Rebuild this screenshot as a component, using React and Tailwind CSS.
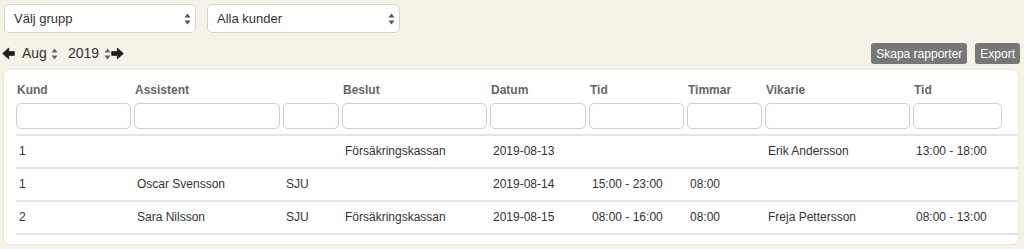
import React from "react";

const Spin = ({ className = "" }) => (
  <svg width="7" height="12" viewBox="0 0 7 12" className={className}>
    <path d="M3.5 0.5 L6.5 4.5 L0.5 4.5 Z" fill="currentColor" />
    <path d="M3.5 11.5 L6.5 7.5 L0.5 7.5 Z" fill="currentColor" />
  </svg>
);

const Arrow = ({ dir }) => (
  <svg width="13" height="13" viewBox="0 0 14 14" style={{ transform: dir === "left" ? "scaleX(-1)" : "none" }}>
    <path d="M0.8 5 H6.8 V1.2 L13.2 7 L6.8 12.8 V9 H0.8 Z" fill="#1e1e1e" stroke="#1e1e1e" strokeWidth="1" strokeLinejoin="round" />
  </svg>
);

const cols = [118, 149, 59, 148, 99, 98, 78, 148, 92];
const headers = ["Kund", "Assistent", "", "Beslut", "Datum", "Tid", "Timmar", "Vikarie", "Tid"];
const rows = [
  ["1", "", "", "Försäkringskassan", "2019-08-13", "", "", "Erik Andersson", "13:00 - 18:00"],
  ["1", "Oscar Svensson", "SJU", "", "2019-08-14", "15:00 - 23:00", "08:00", "", ""],
  ["2", "Sara Nilsson", "SJU", "Försäkringskassan", "2019-08-15", "08:00 - 16:00", "08:00", "Freja Pettersson", "08:00 - 13:00"],
];

const gridCls = "grid grid-cols-[118px_149px_59px_148px_99px_98px_78px_148px_92px]";

export default function App() {
  return (
    <div className="w-[1024px] h-[249px] bg-[#f5f2e7] text-[#333] overflow-hidden" style={{ fontFamily: '"Liberation Sans", Arial, sans-serif' }}>
      <div className="flex gap-[11px] pl-[4px] pt-[4px]">
        <div className="w-[192px] h-[29px] bg-white border border-[#d6d3cb] rounded-[5px] flex items-center justify-between pl-[9px] pr-[4px] text-[13px]">
          <span>Välj grupp</span>
          <Spin className="text-[#555]" />
        </div>
        <div className="w-[193px] h-[29px] bg-white border border-[#d6d3cb] rounded-[5px] flex items-center justify-between pl-[9px] pr-[4px] text-[13px]">
          <span>Alla kunder</span>
          <Spin className="text-[#555]" />
        </div>
      </div>
      <div className="flex items-center justify-between mt-[10px] h-[21px] pr-[4px]">
        <div className="flex items-center pl-[2px] text-[14px]">
          <Arrow dir="left" />
          <span className="ml-[7px]">Aug</span>
          <Spin className="ml-[4px] text-[#666]" />
          <span className="ml-[10px]">2019</span>
          <Spin className="ml-[5px] text-[#666]" />
          <Arrow dir="right" />
        </div>
        <div className="flex gap-[8px]">
          <button className="h-[21px] px-[5px] bg-[#777] text-white text-[12px] rounded-[3px]">Skapa rapporter</button>
          <button className="h-[21px] px-[5px] bg-[#777] text-white text-[12px] rounded-[3px]">Export</button>
        </div>
      </div>
      <div className="mt-[6px] ml-[4px] w-[1014px] h-[174px] bg-white rounded-[6px] shadow-[0_0_2px_1px_rgba(0,0,0,0.06)] pl-[12px] pt-[10px]">
        <div className={gridCls + " h-[20px] items-center text-[12px] font-bold text-[#666]"}>
          {headers.map((h, i) => (
            <div key={i} className="pl-[1px]">{h}</div>
          ))}
        </div>
        <div className={gridCls + " mt-[3px] pb-[5px] border-b-2 border-[#e5e5e5]"}>
          {cols.map((c, i) => (
            <div key={i} className="pr-[3px]">
              <div className="h-[26px] border border-[#cfcfcf] rounded-[5px] bg-white" />
            </div>
          ))}
        </div>
        {rows.map((r, ri) => (
          <div key={ri} className={gridCls + " h-[33px] items-center pb-[2px] border-b-2 border-[#e5e5e5] text-[12px]"}>
            {r.map((v, i) => (
              <div key={i} className="pl-[3px] whitespace-nowrap">{v}</div>
            ))}
          </div>
        ))}
      </div>
    </div>
  );
}
